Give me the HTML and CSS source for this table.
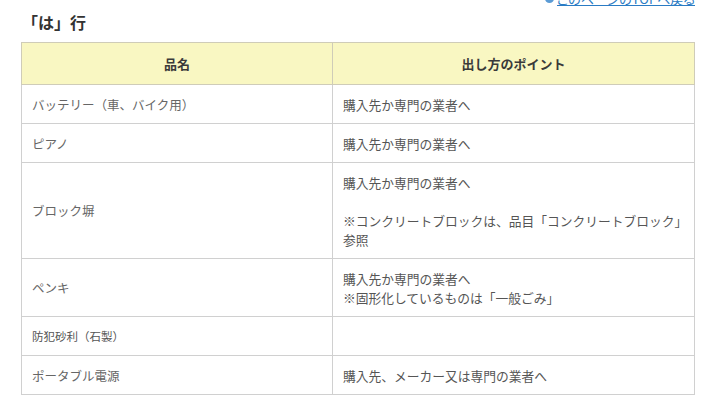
FILE: index.html
```html
<!DOCTYPE html>
<html lang="ja">
<head>
<meta charset="utf-8">
<title>「は」行</title>
<link rel="stylesheet" href="styles.css">
</head>
<body>
<div class="page">
  <div class="toplink">
    <a href="#top" class="toplink-a"><svg class="toplink-icon" width="9" height="9" viewBox="0 0 9 9"><circle cx="4.5" cy="4.5" r="4.5" fill="#5b9bd5"/><path d="M2.5 5.3 L4.5 3.2 L6.5 5.3" fill="none" stroke="#fff" stroke-width="1.3"/></svg><span>このページのTOPへ戻る</span></a>
  </div>
  <h2 class="heading">「は」行</h2>
  <table class="list">
    <thead>
      <tr><th class="col-name">品名</th><th class="col-point">出し方のポイント</th></tr>
    </thead>
    <tbody>
      <tr><td class="name">バッテリー（車、バイク用）</td><td class="point">購入先か専門の業者へ</td></tr>
      <tr><td class="name">ピアノ</td><td class="point">購入先か専門の業者へ</td></tr>
      <tr><td class="name">ブロック塀</td><td class="point">購入先か専門の業者へ<br><br>※コンクリートブロックは、品目「コンクリートブロック」参照</td></tr>
      <tr><td class="name">ペンキ</td><td class="point">購入先か専門の業者へ<br>※固形化しているものは「一般ごみ」</td></tr>
      <tr><td class="name small">防犯砂利（石製）</td><td class="point"></td></tr>
      <tr><td class="name">ポータブル電源</td><td class="point">購入先、メーカー又は専門の業者へ</td></tr>
    </tbody>
  </table>
</div>
</body>
</html>
```
FILE: styles.css
```css
html, body {
  margin: 0;
  padding: 0;
  background: #ffffff;
}
body {
  font-family: "Noto Sans CJK JP", "Noto Sans", sans-serif;
  color: #555555;
  overflow: hidden;
}
.page {
  width: 674px;
  padding-left: 21px;
}
.toplink {
  margin-top: -12px;
  line-height: 20px;
  height: 20px;
  text-align: right;
  font-size: 13px;
  font-feature-settings: "palt";
}
.toplink-a {
  color: #2a7bc4;
  text-decoration: underline;
  display: inline-flex;
  align-items: center;
  gap: 3px;
}
.toplink-icon {
  display: block;
}
.heading {
  margin: 2px 0 8px 1px;
  font-size: 16px;
  line-height: 24px;
  height: 24px;
  font-weight: bold;
  color: #333333;
}
.list {
  width: 674px;
  border-collapse: collapse;
  table-layout: fixed;
}
.list th {
  background: #f9f7c2;
  color: #3a3a3a;
  font-size: 13px;
  font-weight: bold;
  line-height: 19px;
  padding: 11px 10px;
  border: 1px solid #cfccb8;
  text-align: center;
}
.col-name { width: 290px; }
.list td {
  border: 1px solid #d0d0d0;
  padding: 9.5px 10px;
  line-height: 19px;
  vertical-align: middle;
}
.name {
  font-size: 12.5px;
  color: #666666;
}
.name.small {
  font-size: 11.5px;
  color: #555555;
}
.list td.point {
  font-size: 12.75px;
  color: #555555;
  padding-right: 4px;
}
```
